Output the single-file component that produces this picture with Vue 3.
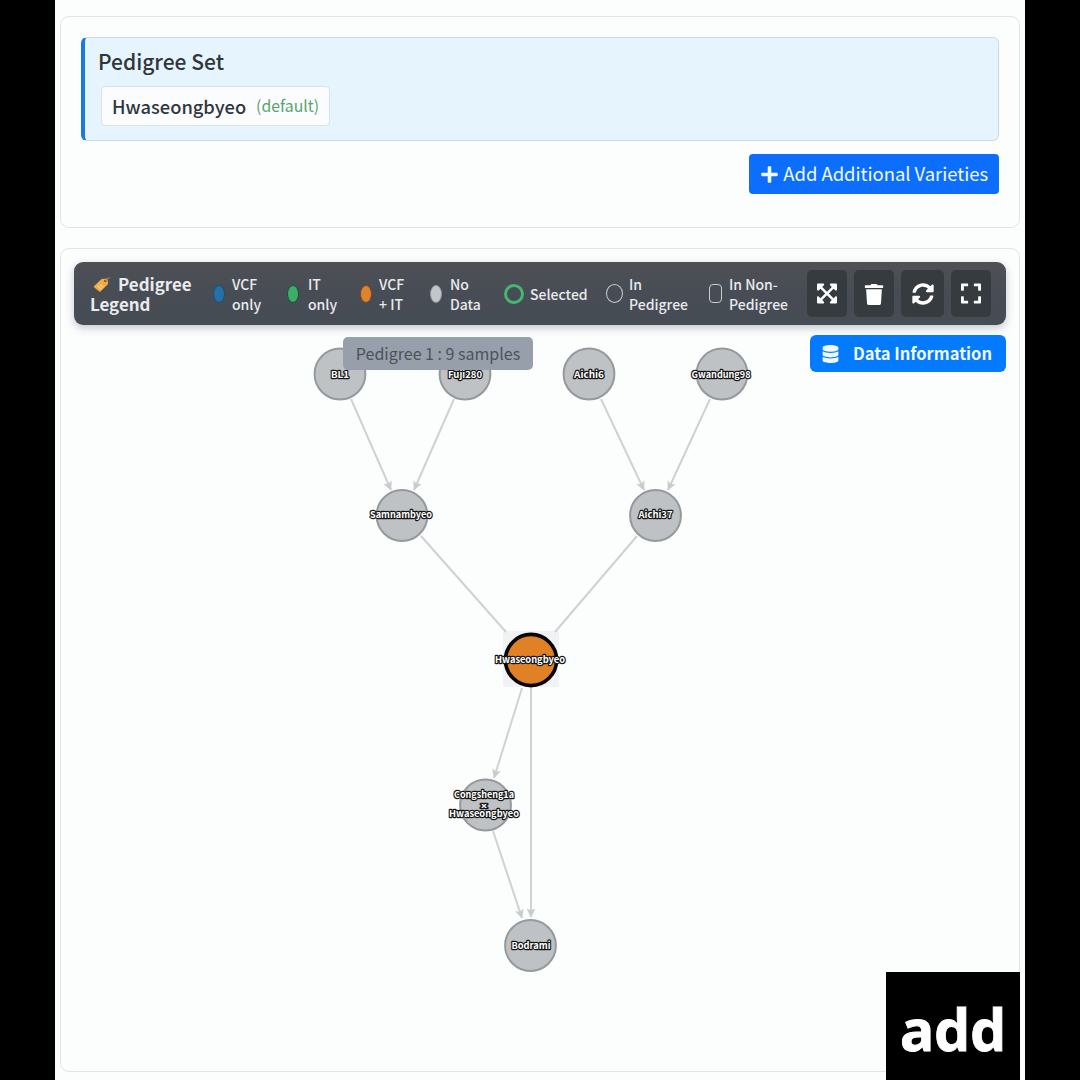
<script setup>
const legend = [
  { lines: ['VCF', 'only'], kind: 'dot', color: '#2670a8', edge: '#1b4d78', left: 213, text: 232 },
  { lines: ['IT', 'only'], kind: 'dot', color: '#3cae68', edge: '#175437', left: 287, text: 308 },
  { lines: ['VCF', '+ IT'], kind: 'dot', color: '#de8431', edge: '#734b2b', left: 360, text: 379 },
  { lines: ['No', 'Data'], kind: 'dot', color: '#c2c7ca', edge: '#92989c', left: 430, text: 450 },
  { lines: ['Selected'], kind: 'ring', left: 504, text: 530 },
  { lines: ['In', 'Pedigree'], kind: 'oval', left: 606, text: 629 },
  { lines: ['In Non-', 'Pedigree'], kind: 'box', left: 709, text: 729 },
]
const tools = [
  { name: 'fit', w: 40, box: '0 0 448 512', d: 'M448 344v112a23.94 23.94 0 0 1-24 24H312c-21.39 0-32.09-25.9-17-41l36.2-36.2L224 295.6 116.77 402.9 153 439c15.09 15.1 4.39 41-17 41H24a23.94 23.94 0 0 1-24-24V344c0-21.4 25.89-32.1 41-17l36.19 36.2L184.46 256 77.18 148.7 41 185c-15.1 15.1-41 4.4-41-17V56a23.94 23.94 0 0 1 24-24h112c21.39 0 32.09 25.9 17 41l-36.2 36.2L224 216.4l107.23-107.3L295 73c-15.09-15.1-4.39-41 17-41h112a23.94 23.94 0 0 1 24 24v112c0 21.4-25.89 32.1-41 17l-36.19-36.2L263.54 256l107.28 107.3L407 327.1c15.1-15.2 41-4.5 41 16.9z' },
  { name: 'clear', w: 40, box: '0 0 448 512', d: 'M432 32H312l-9.4-18.7A24 24 0 0 0 281.1 0H166.8a23.72 23.72 0 0 0-21.4 13.3L136 32H16A16 16 0 0 0 0 48v32a16 16 0 0 0 16 16h416a16 16 0 0 0 16-16V48a16 16 0 0 0-16-16zM53.2 467a48 48 0 0 0 47.9 45h245.8a48 48 0 0 0 47.9-45L416 128H32z' },
  { name: 'reload', w: 43, box: '0 0 512 512', d: 'M370.72 133.28C339.458 104.008 298.888 87.962 255.848 88c-77.458.068-144.328 53.178-162.791 126.85-1.344 5.363-6.122 9.15-11.651 9.15H24.103c-7.498 0-13.194-6.807-11.807-14.176C33.933 94.924 134.813 8 256 8c66.448 0 126.791 26.136 171.315 68.685L463.03 40.97C478.149 25.851 504 36.559 504 57.941V192c0 13.255-10.745 24-24 24H345.941c-21.382 0-32.09-25.851-16.971-40.971l41.75-41.749zM32 296h134.059c21.382 0 32.09 25.851 16.971 40.971l-41.75 41.75c31.262 29.273 71.835 45.319 114.876 45.28 77.418-.07 144.315-53.144 162.787-126.849 1.344-5.363 6.122-9.15 11.651-9.15h57.304c7.498 0 13.194 6.807 11.807 14.176C478.067 417.076 377.187 504 256 504c-66.448 0-126.791-26.136-171.315-68.685L48.97 471.03C33.851 486.149 8 475.441 8 454.059V320c0-13.255 10.745-24 24-24z' },
  { name: 'fullscreen', w: 40, box: '0 0 448 512', d: 'M0 180V56c0-13 11-24 24-24h124c7 0 12 5 12 12v40c0 7-5 12-12 12H64v84c0 7-5 12-12 12H12c-7 0-12-5-12-12zM288 44v40c0 7 5 12 12 12h84v84c0 7 5 12 12 12h40c7 0 12-5 12-12V56c0-13-11-24-24-24H300c-7 0-12 5-12 12zM436 320h-40c-7 0-12 5-12 12v84h-84c-7 0-12 5-12 12v40c0 7 5 12 12 12h124c13 0 24-11 24-24V332c0-7-5-12-12-12zM160 468v-40c0-7-5-12-12-12H64v-84c0-7-5-12-12-12H12c-7 0-12 5-12 12v124c0 13 11 24 24 24h124c7 0 12-5 12-12z' },
]
const nodes = [
  { x: 340, y: 374, labels: [{ t: 'BL1', w: 18, x: 340, y: 377.5 }] },
  { x: 465, y: 374, labels: [{ t: 'Fuji280', w: 34, x: 465, y: 377.5 }] },
  { x: 589, y: 374, labels: [{ t: 'Aichi6', w: 30, x: 589, y: 377.5 }] },
  { x: 722, y: 374, labels: [{ t: 'Gwandung98', w: 59, x: 721, y: 377.5 }] },
  { x: 402, y: 515.5, labels: [{ t: 'Samnambyeo', w: 62, x: 401, y: 518 }] },
  { x: 655.5, y: 515.5, labels: [{ t: 'Aichi37', w: 34, x: 655.5, y: 518 }] },
  { x: 531, y: 660, main: true, labels: [{ t: 'Hwaseongbyeo', w: 70, x: 530, y: 663 }] },
  { x: 485.5, y: 805, labels: [{ t: 'Congsheng1a', w: 60, x: 484, y: 798 }, { t: 'x', w: 6, x: 484, y: 807.5 }, { t: 'Hwaseongbyeo', w: 70, x: 484, y: 817 }] },
  { x: 530.5, y: 945.5, labels: [{ t: 'Bodrami', w: 39, x: 531, y: 949 }] },
]
const edges = [
  [351, 399, 391, 490, 1], [454, 399, 414, 490, 1], [601, 399, 644, 490, 1], [710, 399, 668, 490, 1],
  [421, 536, 506, 632, 0], [637, 536, 555, 632, 0],
  [522, 688, 494, 778, 1], [531, 688, 531, 917, 1], [493, 831, 522, 918, 1],
]
</script>

<template>
  <div class="stage">
    <main class="page">
      <section class="card set-card">
        <div class="set">
          <h2>Pedigree Set</h2>
          <div class="chip">
            <span class="chip-name">Hwaseongbyeo</span><span class="chip-note">(default)</span>
          </div>
        </div>
        <button class="add">
          <svg viewBox="0 0 448 512" width="17" height="19"><path fill="currentColor" d="M416 208H272V64c0-17.67-14.33-32-32-32h-32c-17.67 0-32 14.33-32 32v144H32c-17.67 0-32 14.33-32 32v32c0 17.67 14.33 32 32 32h144v144c0 17.67 14.33 32 32 32h32c17.67 0 32-14.33 32-32V304h144c17.67 0 32-14.33 32-32v-32c0-17.67-14.33-32-32-32z" /></svg>
          <span>Add Additional Varieties</span>
        </button>
      </section>

      <section class="card graph-card">
        <svg class="graph" viewBox="61 249 958 821">
          <defs>
            <marker id="tip" markerUnits="userSpaceOnUse" markerWidth="10" markerHeight="9" refX="8.5" refY="4.5" orient="auto">
              <path d="M0 0L9 4.5L0 9L1.8 4.5z" fill="#cacbcc" />
            </marker>
          </defs>
          <rect x="503" y="631" width="56" height="56" rx="2" fill="#f0f2f4" />
          <line v-for="(e, i) in edges" :key="i" :x1="e[0]" :y1="e[1]" :x2="e[2]" :y2="e[3]" class="edge" :marker-end="e[4] ? 'url(#tip)' : null" />
          <g v-for="(n, i) in nodes" :key="'n' + i">
            <circle :cx="n.x" :cy="n.y" :r="n.main ? 25.6 : 25.4" :class="n.main ? 'node main' : 'node'" />
            <text v-for="l in n.labels" :key="l.t" :x="l.x" :y="l.y" :textLength="l.w" lengthAdjust="spacingAndGlyphs" class="label" :class="{ cross: l.t === 'x' }">{{ l.t }}</text>
          </g>
        </svg>

        <div class="toolbar">
          <div class="title">
            <svg viewBox="0 0 20 18" width="19" height="17">
              <path d="M2.2 10.6L10 3.1L16.3 2.6L17 8.4L9.2 16.2Q8 17 6.9 16L2.3 12.3Q1.3 11.6 2.2 10.6z" fill="#f3aa45" />
              <path d="M5.6 10.3l4.4 3.7M7.8 8.3l4.3 3.7" stroke="#ffd486" stroke-width="1.2" />
              <circle cx="14" cy="5.3" r="1.2" fill="#5b4934" />
              <path d="M14 5.2Q16.5 1 19 1.8" fill="none" stroke="#9c8a78" stroke-width=".9" />
            </svg><span>Pedigree</span><br>Legend
          </div>
          <div class="legend">
            <div v-for="(l, i) in legend" :key="i" class="item" :style="{ width: ((legend[i + 1]?.left ?? 807) - l.left) + 'px' }">
              <span class="mark-slot" :style="{ width: (l.text - l.left) + 'px' }">
                <i class="mark" :class="l.kind" :style="{ background: l.color, borderColor: l.edge }"></i>
              </span>
              <span class="words"><template v-for="(w, k) in l.lines" :key="w"><br v-if="k">{{ w }}</template></span>
            </div>
          </div>
          <div class="tools">
            <button v-for="t in tools" :key="t.name" :style="{ width: t.w + 'px' }">
              <svg :viewBox="t.box" height="23" width="20" :class="t.name"><path fill="currentColor" :d="t.d" /></svg>
            </button>
          </div>
        </div>

        <button class="info">
          <svg viewBox="0 0 448 512" width="17" height="18"><path fill="currentColor" d="M448 73.143v45.714C448 159.143 347.667 192 224 192S0 159.143 0 118.857V73.143C0 32.857 100.333 0 224 0s224 32.857 224 73.143zM448 176v102.857C448 319.143 347.667 352 224 352S0 319.143 0 278.857V176c48.125 33.143 136.208 48.572 224 48.572S399.874 209.143 448 176zm0 160v102.857C448 479.143 347.667 512 224 512S0 479.143 0 438.857V336c48.125 33.143 136.208 48.572 224 48.572S399.874 369.143 448 336z" /></svg>
          <span>Data Information</span>
        </button>
        <div class="tooltip">Pedigree 1 : 9 samples</div>
      </section>
      <div class="caption">add</div>
    </main>
  </div>
</template>

<style>
body { margin: 0; background: #000; }
</style>

<style scoped>
* { box-sizing: border-box; }
.stage {
  height: 1080px;
  padding: 0 55px;
  background: #000;
  overflow: hidden;
  font-family: "Noto Sans CJK KR", "Noto Sans", sans-serif;
  color: #30363c;
}
.page {
  position: relative;
  height: 1080px;
  padding: 16px 5px 8px;
  display: flex;
  flex-direction: column;
  gap: 20px;
  background: #fcfefe;
}
.card { position: relative; border: 1px solid #e1e3e4; border-radius: 9px; }
button { border: 0; font-family: inherit; color: #eefaff; display: flex; align-items: center; padding: 0; }
.set-card { height: 212px; padding: 20px 20px 0; display: flex; flex-direction: column; align-items: flex-end; }
.set {
  width: 100%;
  height: 104px;
  padding: 7px 14px 0 13px;
  background: #e5f4fd;
  border: 1px solid #c9dbe9;
  border-left: 4px solid #1c78de;
  border-radius: 6px;
}
h2 { margin: 0; font-size: 21px; line-height: 32px; font-weight: 500; white-space: nowrap; }
.chip {
  width: 229px;
  height: 40px;
  margin: 9px 0 0 3px;
  padding: 0 10px;
  display: flex;
  align-items: center;
  justify-content: space-between;
  background: #fafcfe;
  border: 1px solid #dbe1e8;
  border-radius: 4px;
  line-height: 36px;
  white-space: nowrap;
}
.chip-name { font-size: 18.3px; font-weight: 500; padding-bottom: 1px; }
.chip-note { font-size: 15.8px; color: #5ba36c; }
.add { width: 250px; height: 40px; margin-top: 13px; padding: 0 11px 0 12px; justify-content: space-between; background: #0d6efd; border-radius: 4px; font-size: 18.5px; white-space: nowrap; }
.add span, .info span { padding-bottom: 2px; }
.add span { letter-spacing: -.05px; }
.graph-card { height: 824px; padding: 13px 13px 0; display: flex; flex-direction: column; align-items: flex-end; }
.graph { position: absolute; inset: 0; width: 958px; height: 821px; }
.edge { stroke: #d0d1d2; stroke-width: 2; }
.node { fill: #bfc2c4; stroke: #94999c; stroke-width: 2; }
.main { fill: #e08125; stroke: #080604; stroke-width: 3.6; }
.label { font-size: 9.5px; font-weight: 700; text-anchor: middle; fill: #fff; stroke: #151515; stroke-width: 2.4px; paint-order: stroke; stroke-linejoin: round; }
.cross { font-size: 6.5px; }
.toolbar {
  position: relative;
  width: 932px;
  height: 63px;
  padding-left: 16px;
  display: flex;
  align-items: center;
  border-radius: 9px;
  background: linear-gradient(#4e5054, #484d55 45%, #464c54);
  box-shadow: 0 3px 8px rgba(50, 55, 80, .28);
  color: #e9ebee;
}
.title { width: 123px; font-size: 16.9px; font-weight: 700; line-height: 20px; white-space: nowrap; }
.title svg { margin: 0 7px 0 2px; vertical-align: -2px; }
.legend { display: flex; width: 594px; }
.item { display: flex; align-items: center; flex: none; height: 44px; }
.mark-slot { flex: none; display: flex; }
.mark { width: 12px; height: 18px; border: 1px solid; border-radius: 50%; }
.ring { width: 20px; height: 20px; border: 3px solid #43b774; }
.oval { width: 17px; height: 19px; border: 1.5px solid #c8cdd0; }
.box { width: 13px; height: 19px; border: 1.5px solid #c8cdd0; border-radius: 4px; }
.words { font-size: 14px; line-height: 20px; font-weight: 500; white-space: nowrap; }
.tools { display: flex; gap: 7px; }
.tools button { height: 47px; justify-content: center; background: #363b3f; border-radius: 5px; color: #fff; }
.tools .reload { height: 22px; width: 22px; }
.tools .clear { height: 21px; padding-top: 0; position: relative; top: 1px; }
.info { position: relative; width: 196px; height: 37px; margin-top: 10px; padding: 0 14px 0 12px; justify-content: space-between; background: #047bfe; border-radius: 6px; font-size: 16.5px; font-weight: 700; white-space: nowrap; }
.tooltip {
  position: absolute;
  left: 282px;
  top: 88px;
  width: 190px;
  height: 33px;
  line-height: 32px;
  text-align: center;
  background: #979fab;
  border-radius: 5px;
  font-size: 16px;
  color: #4b525d;
  white-space: nowrap;
}
.caption {
  position: absolute;
  right: 5px;
  bottom: 0;
  width: 134px;
  height: 108px;
  padding-top: 7px;
  background: #000;
  color: #fff;
  font: 700 57px/100px "Noto Sans", sans-serif;
  -webkit-text-stroke: .8px #fff;
  text-align: center;
}
</style>
